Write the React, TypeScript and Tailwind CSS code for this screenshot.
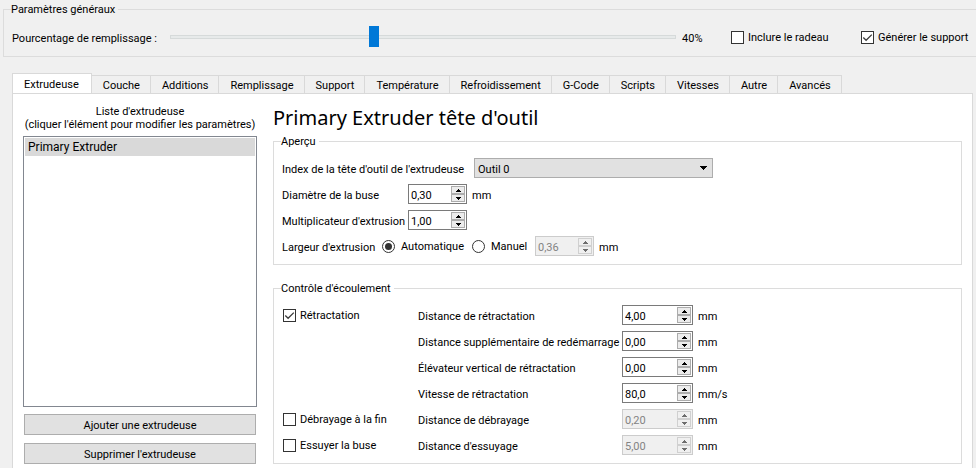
import { useId, useState, type ReactNode } from "react";

const tabs = [
  "Couche",
  "Additions",
  "Remplissage",
  "Support",
  "Température",
  "Refroidissement",
  "G-Code",
  "Scripts",
  "Vitesses",
  "Autre",
  "Avancés",
];

const flowRows = [
  { check: "Rétractation", checked: true, label: "Distance de rétractation", value: "4,00", unit: "mm" },
  { label: "Distance supplémentaire de redémarrage", value: "0,00", unit: "mm" },
  { label: "Élévateur vertical de rétractation", value: "0,00", unit: "mm" },
  { label: "Vitesse de rétractation", value: "80,0", unit: "mm/s" },
  { check: "Débrayage à la fin", label: "Distance de débrayage", value: "0,20", unit: "mm", disabled: true },
  { check: "Essuyer la buse", label: "Distance d'essuyage", value: "5,00", unit: "mm", disabled: true },
];

function CheckBox({ label, checked = false }: { label: string; checked?: boolean }) {
  return (
    <label className="flex items-center gap-1 whitespace-nowrap">
      <span className="grid size-[13px] shrink-0">
        <input
          type="checkbox"
          defaultChecked={checked}
          className="peer col-start-1 row-start-1 size-[13px] appearance-none border border-[#333] bg-white"
        />
        <svg
          viewBox="0 0 13 13"
          className="pointer-events-none invisible col-start-1 row-start-1 size-[13px] peer-checked:visible"
          aria-hidden="true"
        >
          <path d="M2.3 6.5 5.1 9.3 10.8 3.6" fill="none" stroke="#3c3c3c" strokeWidth="1.3" />
        </svg>
      </span>
      {label}
    </label>
  );
}

function Radio({ label, checked = false }: { label: string; checked?: boolean }) {
  return (
    <label className="flex items-center gap-1.5 whitespace-nowrap">
      <input
        type="radio"
        name="extrusion-width"
        defaultChecked={checked}
        className="size-[13px] appearance-none rounded-full border border-[#333] bg-white bg-clip-content p-0.5 checked:bg-[#333]"
      />
      {label}
    </label>
  );
}

function SpinBox({ id, label, value, wide = false, disabled = false }: {
  id?: string;
  label?: string;
  value: string;
  wide?: boolean;
  disabled?: boolean;
}) {
  const decimals = value.split(",")[1].length;
  const [text, setText] = useState(value);
  const step = (delta: number) => {
    const next = parseFloat(text.replace(",", ".")) + delta;
    setText(Math.max(0, next).toFixed(decimals).replace(".", ","));
  };
  const arrow = disabled ? "#6d6d6d" : "#000";
  const button = `flex h-2 w-3.5 items-center justify-center border ${
    disabled ? "border-[#d0d0d0] bg-[#f0f0f0]" : "border-[#acacac] bg-[#ececec]"
  }`;
  return (
    <span
      className={`flex h-5 shrink-0 items-center justify-between border pr-px ${wide ? "w-[71px]" : "w-[59px]"} ${
        disabled ? "border-[#ccc] bg-[#f0f0f0] text-[#838383]" : "border-[#7a7a7a] bg-white"
      }`}
    >
      <input
        id={id}
        aria-label={label}
        type="text"
        inputMode="decimal"
        value={text}
        disabled={disabled}
        onChange={(e) => setText(e.target.value)}
        className="h-full w-9 min-w-0 bg-transparent pt-0.5 pl-0.5 outline-none"
      />
      <span className="flex flex-col">
        <button type="button" aria-label="Augmenter" disabled={disabled} onClick={() => step(0.1)} className={button}>
          <svg viewBox="0 0 5 3" className="h-[3px] w-[5px]" shapeRendering="crispEdges" aria-hidden="true">
            <path d="M2 0h1v1h1v1h1v1H0V2h1V1h1z" fill={arrow} />
          </svg>
        </button>
        <button type="button" aria-label="Diminuer" disabled={disabled} onClick={() => step(-0.1)} className={button}>
          <svg viewBox="0 0 5 3" className="h-[3px] w-[5px]" shapeRendering="crispEdges" aria-hidden="true">
            <path d="M0 0h5v1H4v1H3v1H2V2H1V1H0z" fill={arrow} />
          </svg>
        </button>
      </span>
    </span>
  );
}

function Group({ title, className, children }: { title: string; className: string; children: ReactNode }) {
  return (
    <fieldset className={`min-w-0 border border-[#dcdcdc] ${className}`}>
      <legend className="ml-[7px] pr-[3px] leading-[13px]">{title}</legend>
      {children}
    </fieldset>
  );
}

function FlowRow({ row }: { row: (typeof flowRows)[number] }) {
  const id = useId();
  return (
    <div className="flex h-5 items-center">
      <div className="w-[135px] shrink-0">
        {row.check && <CheckBox label={row.check} checked={row.checked} />}
      </div>
      <label htmlFor={id} className="w-[204px] shrink-0 pt-0.5 whitespace-nowrap">
        {row.label}
      </label>
      <SpinBox id={id} value={row.value} wide disabled={row.disabled} />
      <span className="pt-0.5 pl-[5px]">{row.unit}</span>
    </div>
  );
}

export default function App() {
  const [fill, setFill] = useState(40);
  return (
    <main className="flex min-h-screen flex-col bg-[#f0f0f0] pt-[3px] font-['Roboto','DejaVu_Sans_Condensed',sans-serif] text-[11px] leading-[13px] text-black">
      <Group title="Paramètres généraux" className="ml-[3px] border-r-0 pt-2.5 pb-2">
        <div className="flex h-[22px] items-center pr-1.5 pl-2">
          <label htmlFor="fill" className="w-[158px] shrink-0 pt-0.5">
            Pourcentage de remplissage :
          </label>
          <input
            id="fill"
            type="range"
            min={0}
            max={100}
            value={fill}
            onChange={(e) => setFill(Number(e.target.value))}
            className="h-[21px] min-w-0 flex-1 appearance-none bg-transparent [&::-webkit-slider-runnable-track]:h-1 [&::-webkit-slider-runnable-track]:border [&::-webkit-slider-runnable-track]:border-[#d6dada] [&::-webkit-slider-runnable-track]:bg-[#e7eaea] [&::-webkit-slider-thumb]:-mt-2.5 [&::-webkit-slider-thumb]:h-[21px] [&::-webkit-slider-thumb]:w-2.5 [&::-webkit-slider-thumb]:appearance-none [&::-webkit-slider-thumb]:bg-[#0078d7]"
          />
          <output htmlFor="fill" className="w-[55px] shrink-0 pt-0.5 pl-1.5">
            {fill}%
          </output>
          <div className="w-[130px] shrink-0">
            <CheckBox label="Inclure le radeau" />
          </div>
          <div className="w-[109px] shrink-0">
            <CheckBox label="Générer le support" checked />
          </div>
        </div>
      </Group>

      <div className="mt-4 mr-[3px] ml-3 flex flex-1 flex-col">
        <div role="tablist" className="flex items-end">
          <button
            type="button"
            role="tab"
            aria-selected="true"
            className="-mb-px h-[21px] border border-b-0 border-[#d9d9d9] bg-white pr-3 pl-[11px]"
          >
            Extrudeuse
          </button>
          {tabs.map((tab) => (
            <button
              key={tab}
              type="button"
              role="tab"
              aria-selected="false"
              className="h-[18px] border-t border-r border-[#d9d9d9] bg-[#f0f0f0] pt-px pr-2.5 pl-[11px]"
            >
              {tab}
            </button>
          ))}
        </div>

        <div role="tabpanel" className="flex flex-1 gap-4 border border-b-0 border-[#d9d9d9] bg-white px-2.5">
          <section className="flex w-[234px] shrink-0 flex-col pt-[11px]">
            <p className="text-center whitespace-nowrap">
              Liste d'extrudeuse
              <br />
              (cliquer l'élément pour modifier les paramètres)
            </p>
            <ul className="mt-[5px] h-[271px] border border-[#828790] bg-white p-px text-xs">
              <li className="bg-[#d9d9d9] pl-[3px] leading-[18px]">Primary Extruder</li>
            </ul>
            <div className="flex flex-col gap-2 px-px pt-[7px]">
              <button type="button" className="h-[21px] border border-[#adadad] bg-[#e1e1e1] pt-px">
                Ajouter une extrudeuse
              </button>
              <button type="button" className="h-[21px] border border-[#adadad] bg-[#e1e1e1] pt-px">
                Supprimer l'extrudeuse
              </button>
            </div>
          </section>

          <section className="flex min-w-0 flex-1 flex-col pt-2.5">
            <h1 className="font-['Noto_Sans','Open_Sans',sans-serif] text-xl leading-7">
              Primary Extruder tête d'outil
            </h1>

            <Group title="Aperçu" className="mt-[3px] pt-2.5 pb-2">
              <div className="flex flex-col gap-1.5 pl-2">
                <div className="flex h-5 items-center">
                  <label htmlFor="tool" className="w-48 shrink-0 pt-0.5 whitespace-nowrap">
                    Index de la tête d'outil de l'extrudeuse
                  </label>
                  <div className="relative h-5 w-[239px]">
                    <select
                      id="tool"
                      className="h-5 w-full appearance-none border border-[#adadad] bg-[#e1e1e1] pt-0.5 pl-[3px]"
                    >
                      <option>Outil 0</option>
                      <option>Outil 1</option>
                    </select>
                    <svg
                      viewBox="0 0 7 4"
                      className="pointer-events-none absolute top-2 right-1.5 h-1 w-[7px]"
                      shapeRendering="crispEdges"
                      aria-hidden="true"
                    >
                      <path d="M0 0h7v1H6v1H5v1H4v1H3V3H2V2H1V1H0z" />
                    </svg>
                  </div>
                </div>
                <div className="flex h-5 items-center">
                  <label htmlFor="nozzle" className="w-[126px] shrink-0 pt-0.5 whitespace-nowrap">
                    Diamètre de la buse
                  </label>
                  <SpinBox id="nozzle" value="0,30" />
                  <span className="pt-0.5 pl-[5px]">mm</span>
                </div>
                <div className="flex h-5 items-center">
                  <label htmlFor="multiplier" className="w-[126px] shrink-0 pt-0.5 whitespace-nowrap">
                    Multiplicateur d'extrusion
                  </label>
                  <SpinBox id="multiplier" value="1,00" />
                </div>
                <div role="radiogroup" aria-label="Largeur d'extrusion" className="flex h-5 items-center">
                  <span className="w-[100px] shrink-0 pt-0.5 whitespace-nowrap">Largeur d'extrusion</span>
                  <div className="w-[90px] shrink-0">
                    <Radio label="Automatique" checked />
                  </div>
                  <div className="w-[63px] shrink-0">
                    <Radio label="Manuel" />
                  </div>
                  <SpinBox label="Manuel" value="0,36" disabled />
                  <span className="pt-0.5 pl-[5px]">mm</span>
                </div>
              </div>
            </Group>

            <Group title="Contrôle d'écoulement" className="mt-[17px] pt-2.5 pb-2">
              <div className="flex flex-col gap-1.5 pl-[9px]">
                {flowRows.map((row) => (
                  <FlowRow key={row.label} row={row} />
                ))}
              </div>
            </Group>
          </section>
        </div>
      </div>
    </main>
  );
}
